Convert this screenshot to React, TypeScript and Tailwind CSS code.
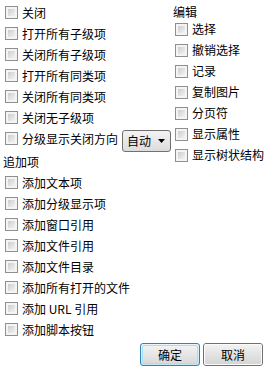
import React from "react";

const left = [
  "关闭",
  "打开所有子级项",
  "关闭所有子级项",
  "打开所有同类项",
  "关闭所有同类项",
  "关闭无子级项",
];

const extras = [
  "添加文本项",
  "添加分级显示项",
  "添加窗口引用",
  "添加文件引用",
  "添加文件目录",
  "添加所有打开的文件",
  "添加 URL 引用",
  "添加脚本按钮",
];

const edit = ["选择", "撤销选择", "记录", "复制图片", "分页符", "显示属性", "显示树状结构"];

function Box() {
  return (
    <div className="w-[13px] h-[13px] shrink-0 border border-[#8e8f8f] bg-[#f4f4f4] p-[2px]">
      <div className="w-full h-full bg-gradient-to-br from-[#cbcdd0] to-[#f3f3f3]" />
    </div>
  );
}

function Check({ label }: { label: string }) {
  return (
    <div className="flex items-center h-[21px] pl-[2px]">
      <Box />
      <span className="ml-[4px] whitespace-nowrap">{label}</span>
    </div>
  );
}

export default function App() {
  return (
    <div
      className="w-[275px] h-[373px] bg-white text-black text-[12px] leading-[14px] overflow-hidden"
      style={{ fontFamily: '"Noto Sans CJK SC", "Noto Sans", sans-serif' }}
    >
      <div className="flex">
        <div className="w-[170px] pl-[3px] pt-[2px]">
          {left.map((l) => (
            <Check key={l} label={l} />
          ))}
          <div className="flex items-center h-[21px] pl-[2px]">
            <Box />
            <span className="ml-[4px] whitespace-nowrap">分级显示关闭方向</span>
            <div className="ml-[4px] mt-[5px] w-[49px] h-[22px] shrink-0 rounded-[3px] border border-[#707070] bg-gradient-to-b from-[#f3f3f3] to-[#dcdcdc] flex items-center pl-[4px] pr-[5px] justify-between">
              <span>自动</span>
              <svg width="7" height="4" viewBox="0 0 7 4">
                <path d="M0 0H7L3.5 4Z" fill="#000" />
              </svg>
            </div>
          </div>
          <div className="h-[23px] pt-[3px] flex items-center">追加项</div>
          {extras.map((l) => (
            <Check key={l} label={l} />
          ))}
        </div>
        <div className="pl-[3px] pt-[5.5px]">
          <div className="h-[13px] flex items-center">编辑</div>
          {edit.map((l) => (
            <Check key={l} label={l} />
          ))}
        </div>
      </div>
      <div className="flex justify-end gap-[3px] pr-[12px] mt-[3px]">
        <button className="w-[60px] h-[23px] rounded-[3px] border border-[#3c7fb1] bg-gradient-to-b from-[#eaf6fd] to-[#c4e5f6] p-[1px]">
          <div className="w-full h-full rounded-[2px] border border-[#a5e0f7] bg-gradient-to-b from-[#f2f2f2] to-[#dadada] flex items-center justify-center">
            确定
          </div>
        </button>
        <button className="w-[60px] h-[23px] rounded-[3px] border border-[#707070] p-[0px]">
          <div className="w-full h-full rounded-[2px] border border-[#fbfbfb] bg-gradient-to-b from-[#f2f2f2] to-[#d5d5d5] flex items-center justify-center">
            取消
          </div>
        </button>
      </div>
    </div>
  );
}
